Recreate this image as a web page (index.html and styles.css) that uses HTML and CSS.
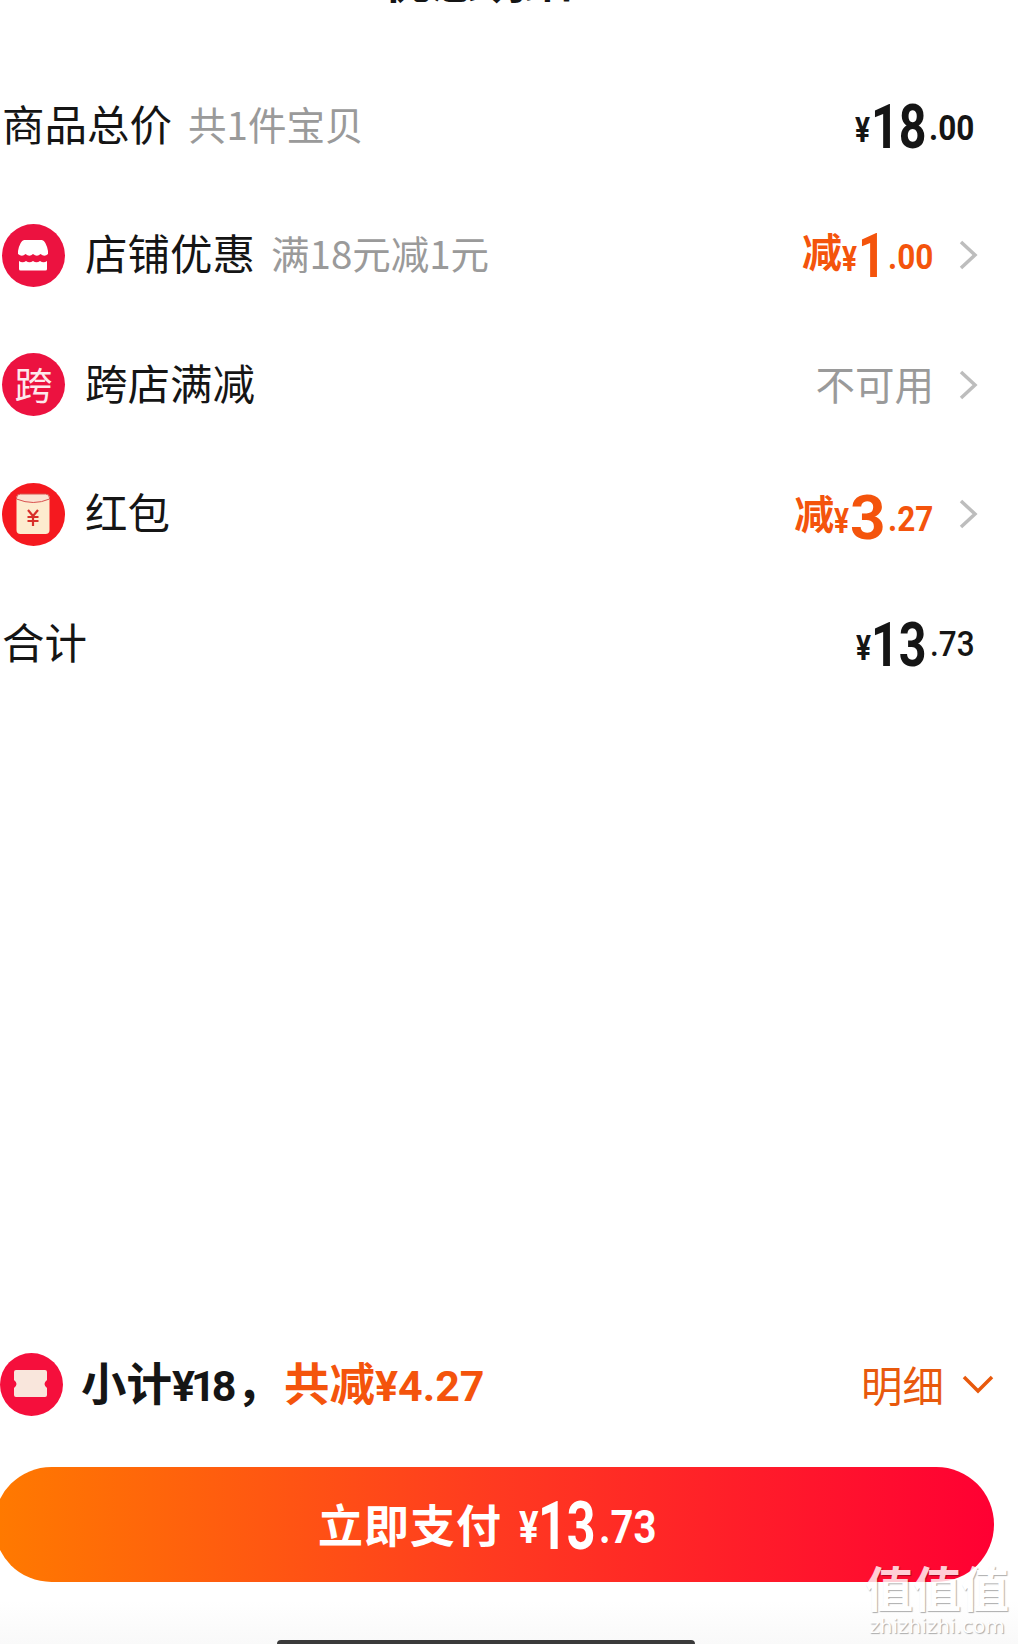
FILE: index.html
```html
<!DOCTYPE html>
<html>
<head>
<meta charset="utf-8" />
<title>立即支付</title>
<link rel="stylesheet" href="styles.css">
</head>
<body>
<div class="page">
	<div class="title"><span>优惠明细</span></div>
	<ul class="list">
		<li class="row">
			<div class="left"><span class="name">商品总价</span><span class="sub">共1件宝贝</span></div>
			<div class="right"><span class="price"><i>¥</i><b>18</b><em>.00</em></span></div>
		</li>
		<li class="row">
			<div class="left">
				<svg class="icon" viewBox="0 0 63 63"><circle cx="31.5" cy="31.5" r="31.5" fill="#ec1240"/><path d="M22 16H40Q44 17 46 27V30q-3.5 3.5-7.5 0q-3.5 3.5-7.5 0q-3.5 3.5-7.5 0q-3.5 3.5-7.5 0V27Q18 17 22 16z" fill="#fff"/><path d="M17 37q3.5 2.5 7 0q3.5 2.5 7 0q3.5 2.5 7 0q3.5 2.5 7 0V45q0 1.5-1.5 1.5H18.5q-1.5 0-1.5-1.5z" fill="#fff"/></svg>
				<span class="name">店铺优惠</span><span class="sub">满18元减1元</span>
			</div>
			<div class="right">
				<span class="price orange up"><u>减</u><i>¥</i><b class="one">1</b><em>.00</em></span>
				<svg class="arrow" viewBox="0 0 20 32"><path d="M3 3l14 13L3 29" fill="none" stroke="#bdbdbd" stroke-width="3.5"/></svg>
			</div>
		</li>
		<li class="row">
			<div class="left">
				<span class="badge">跨</span>
				<span class="name">跨店满减</span>
			</div>
			<div class="right">
				<span class="none">不可用</span>
				<svg class="arrow" viewBox="0 0 20 32"><path d="M3 3l14 13L3 29" fill="none" stroke="#bdbdbd" stroke-width="3.5"/></svg>
			</div>
		</li>
		<li class="row">
			<div class="left">
				<svg class="icon" viewBox="0 0 63 63"><circle cx="31.5" cy="31.5" r="31.5" fill="#f5191f"/><rect x="14.5" y="11" width="33" height="40" rx="4" fill="#fdeccf"/><path d="M14.5 16q17 7 33 0v-1q0-4-4-4h-25q-4 0-4 4z" fill="#fbe3d3" stroke="#d9534f" stroke-width="1"/><path d="M26 27l5 6 5-6M25.5 34h11M25.5 38h11M31 33v10" fill="none" stroke="#d8302a" stroke-width="2.2"/></svg>
				<span class="name">红包</span>
			</div>
			<div class="right">
				<span class="price orange"><u>减</u><i>¥</i><b class="wide">3</b><em>.27</em></span>
				<svg class="arrow" viewBox="0 0 20 32"><path d="M3 3l14 13L3 29" fill="none" stroke="#bdbdbd" stroke-width="3.5"/></svg>
			</div>
		</li>
		<li class="row">
			<div class="left"><span class="name">合计</span></div>
			<div class="right"><span class="price"><i>¥</i><b>13</b><em class="high">.73</em></span></div>
		</li>
	</ul>
	<div class="spacer"></div>
	<div class="summary">
		<div class="left">
			<svg class="icon icon-small-gap" viewBox="0 0 63 63"><circle cx="31.5" cy="31.5" r="31.5" fill="#f50f3c"/><path d="M14 19q0-2 2-2h29q2 0 2 2v8q-5 4 0 8v7q0 2-2 2H16q-2 0-2-2v-7q5-4 0-8z" fill="#f9e6dc"/></svg>
			<span class="total">小计<span class="num tight">¥18</span>，</span><span class="total orange">共减<span class="num">¥4.27</span></span>
		</div>
		<div class="detail">明细<svg class="down" viewBox="0 0 32 20"><path d="M2 3l14 14L30 3" fill="none" stroke="#e8590c" stroke-width="3.5"/></svg></div>
	</div>
	<div class="pay">
		<span class="pay-label">立即支付</span>
		<span class="pay-price"><i>¥</i><b>13</b><em>.73</em></span>
	</div>
	<div class="footer"><div class="home-bar"></div></div>
</div>
<div class="mark">
	<div class="mark-logo">值值值</div>
	<div class="mark-url">zhizhizhi.com</div>
</div>
</body>
</html>
```

FILE: styles.css
```css
*{
    box-sizing: border-box;
}
html,body{
    margin: 0;
    padding: 0;
    height: 100%;
    background: #fff;
    overflow: hidden;
}
body{
    font-family: "Noto Sans CJK SC", "Noto Sans", sans-serif;
    color: #151515;
}
.page{
    height: 1644px;
    display: flex;
    flex-direction: column;
}
.title{
    height: 6px;
    overflow: hidden;
    display: flex;
    justify-content: center;
    align-items: flex-end;
    padding-right: 62px;
    font-size: 47px;
    font-weight: 700;
    line-height: 46px;
}
.title span{
    margin-bottom: 5px;
}
.list{
    list-style: none;
    margin: 0;
    padding: 0;
    padding-top: 55px;
}
.row{
    height: 129.5px;
    display: flex;
    align-items: center;
    justify-content: space-between;
    padding-left: 2px;
    padding-right: 43px;
}
.left{
    display: flex;
    align-items: center;
}
.right{
    display: flex;
    align-items: center;
}
.icon{
    width: 63px;
    height: 63px;
    margin-right: 20px;
    flex: none;
}
.icon-small-gap{
    margin-right: 18px;
}
.badge{
    width: 63px;
    height: 63px;
    margin-right: 20px;
    border-radius: 50%;
    background: #ec1240;
    color: #fde8ec;
    font-size: 38px;
    line-height: 60px;
    text-align: center;
}
.name{
    font-size: 42.5px;
    line-height: 56px;
    margin-bottom: 6px;
}
.sub{
    font-size: 38.5px;
    line-height: 56px;
    color: #9a9a9a;
    margin-left: 16px;
    margin-bottom: 6px;
}
.none{
    font-size: 39.5px;
    line-height: 56px;
    color: #9a9a9a;
    margin-bottom: 4px;
}
.arrow{
    width: 20px;
    height: 32px;
    margin-left: 24px;
    margin-right: -3px;
}
/* no condensed font here, so the digits get squeezed by hand */
.price{
    font-family: "Roboto", sans-serif;
    font-weight: 700;
    line-height: 70px;
    white-space: nowrap;
    margin-top: 18px;
}
.price.up{
    margin-top: 12px;
}
.price i,
.price b,
.price em{
    display: inline-block;
    font-style: normal;
    transform-origin: left center;
}
.price i{
    font-size: 35px;
    vertical-align: 6px;
    transform: scaleX(.8);
    margin-right: -.09em;
}
.price b{
    font-size: 62px;
    font-weight: 700;
    transform: scaleX(.78);
    margin-right: -.247em;
}
.price b.one{
    margin-right: -.123em;
}
.price b.wide{
    transform: none;
    margin-right: 0;
}
.price em{
    font-size: 35px;
    font-weight: 700;
    vertical-align: 8px;
    transform: scaleX(.9);
    margin-left: 3px;
    margin-right: -.137em;
}
.price em.high{
    font-weight: 500;
    vertical-align: 10px;
}
.price u{
    text-decoration: none;
    font-family: "Noto Sans CJK SC", sans-serif;
    font-size: 40px;
    vertical-align: 10px;
}
.orange{
    color: #f4540c;
}
.spacer{
    flex: 1;
}
.summary{
    height: 63px;
    flex: none;
    display: flex;
    align-items: center;
    justify-content: space-between;
    padding-right: 24px;
}
.total{
    font-size: 45.5px;
    font-weight: 700;
    line-height: 60px;
    margin-bottom: 2px;
}
.total.orange{
    margin-left: 2px;
}
.num{
    font-family: "Roboto", sans-serif;
    font-size: 43px;
    font-weight: 700;
}
.num.tight{
    letter-spacing: -4px;
    margin-right: 4px;
}
.detail{
    display: flex;
    align-items: center;
    font-size: 41.5px;
    color: #e8590c;
    margin-bottom: 2px;
}
.down{
    width: 32px;
    height: 20px;
    margin-left: 18px;
}
.pay{
    flex: none;
    height: 115px;
    width: 1000px;
    margin-left: -6px;
    margin-top: 51px;
    border-radius: 58px;
    background: linear-gradient(90deg, #ff7a00 0%, #ff3a20 50%, #ff0033 100%);
    color: #fff;
    display: flex;
    align-items: center;
    justify-content: center;
    gap: 17px;
}
.pay-label{
    font-size: 45px;
    font-weight: 700;
    letter-spacing: 1px;
    margin-bottom: 2px;
}
.pay-price{
    font-family: "Roboto", sans-serif;
    font-weight: 700;
    white-space: nowrap;
    line-height: 70px;
    margin-top: 22px;
    margin-right: 13px;
}
.pay-price i,
.pay-price b,
.pay-price em{
    display: inline-block;
    font-style: normal;
    transform-origin: left center;
}
.pay-price i{
    font-size: 44px;
    vertical-align: 6px;
    transform: scaleX(.83);
    margin-right: -.1em;
}
.pay-price b{
    font-size: 66px;
    font-weight: 700;
    transform: scaleX(.76);
    margin-right: -.27em;
}
.pay-price em{
    font-size: 46px;
    font-weight: 700;
    vertical-align: 6px;
    transform: scaleX(.87);
    margin-left: 3px;
    margin-right: -.178em;
}
.footer{
    flex: none;
    height: 62px;
    background: linear-gradient(#fff 30%, #f9f9f9);
    display: flex;
    justify-content: center;
    align-items: flex-end;
    padding-right: 46px;
}
.home-bar{
    width: 418px;
    height: 4px;
    border-radius: 4px 4px 0 0;
    background: #3a3a3a;
}
.mark{
    position: absolute;
    right: 8px;
    bottom: 6px;
    width: 146px;
    text-align: center;
    color: #fff;
    text-shadow: 1px 1px 1px rgba(0,0,0,0.4);
    opacity: 0.8;
}
.mark-logo{
    font-size: 48px;
    font-weight: 700;
    line-height: 50px;
    margin-bottom: 3px;
    white-space: nowrap;
}
.mark-url{
    font-family: "DejaVu Sans", sans-serif;
    font-size: 20px;
    line-height: 24px;
    white-space: nowrap;
}
```
